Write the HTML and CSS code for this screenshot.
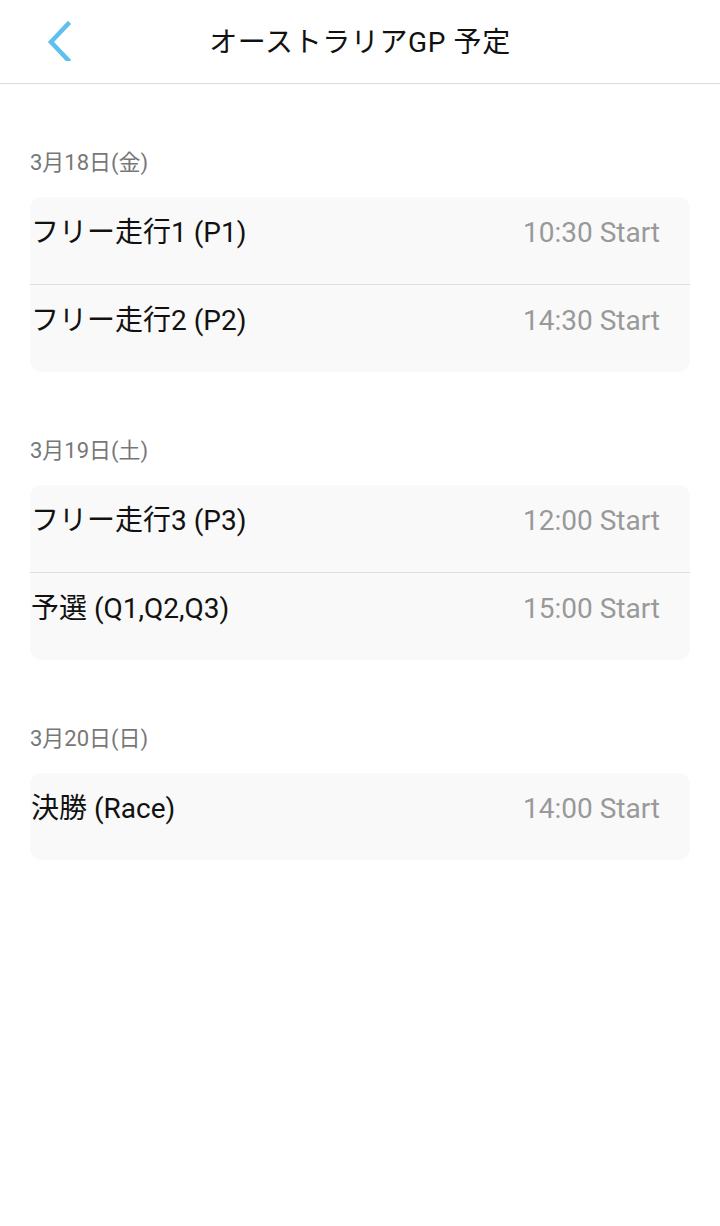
FILE: index.html
```html
<!DOCTYPE html>
<html lang="ja">
<head>
<meta charset="utf-8">
<link rel="stylesheet" href="styles.css">
</head>
<body>
<header class="header">
  <button class="back" aria-label="戻る">
    <svg width="28" height="40" viewBox="0 0 28 40"><polyline points="23,3 6,21 23,39" fill="none" stroke="#5ec0ec" stroke-width="4.5" stroke-linecap="square" stroke-linejoin="miter"/></svg>
  </button>
  <h1 class="title">オーストラリアGP 予定</h1>
</header>
<main class="content">
  <section class="day">
    <div class="date">3月18日(金)</div>
    <div class="card">
      <div class="row"><span class="name">フリー走行1 (P1)</span><span class="time">10:30 Start</span></div>
      <div class="row"><span class="name">フリー走行2 (P2)</span><span class="time">14:30 Start</span></div>
    </div>
  </section>
  <section class="day">
    <div class="date">3月19日(土)</div>
    <div class="card">
      <div class="row"><span class="name">フリー走行3 (P3)</span><span class="time">12:00 Start</span></div>
      <div class="row"><span class="name">予選 (Q1,Q2,Q3)</span><span class="time">15:00 Start</span></div>
    </div>
  </section>
  <section class="day">
    <div class="date">3月20日(日)</div>
    <div class="card">
      <div class="row"><span class="name">決勝 (Race)</span><span class="time">14:00 Start</span></div>
    </div>
  </section>
</main>
</body>
</html>
```
FILE: styles.css
```css
* { box-sizing: border-box; }
html, body { margin: 0; padding: 0; background: #fff; }
body {
  font-family: Roboto, "Noto Sans CJK JP", sans-serif;
  color: #111;
  width: 720px;
}
.header {
  position: relative;
  height: 84px;
  padding-bottom: 4px;
  border-bottom: 1px solid #dcdcdc;
  display: flex;
  align-items: center;
  justify-content: center;
}
.back {
  position: absolute;
  left: 45px;
  top: 20px;
  padding: 0;
  border: 0;
  background: none;
  width: 28px;
  height: 42px;
}
.back svg { display: block; }
.title {
  margin: 0;
  font-size: 28px;
  font-weight: 400;
  color: #111;
  letter-spacing: 0.6px;
}
.content {
  padding: 0 30px;
}
.day {
  padding-top: 64px;
}
.date {
  font-size: 22px;
  line-height: 30px;
  color: #777;
  margin-bottom: 19px;
}
.card {
  background: #f9f9f9;
  border-radius: 12px;
  overflow: hidden;
}
.row {
  box-sizing: content-box;
  height: 71px;
  display: flex;
  align-items: baseline;
  justify-content: space-between;
  padding: 16px 30px 0 1px;
  border-top: 1px solid #dedede;
}
.row:first-child { border-top: 0; }
.name,
.time {
  font-size: 28px;
  line-height: 40px;
}
.name { color: #111; }
.time { color: #999; }
```
